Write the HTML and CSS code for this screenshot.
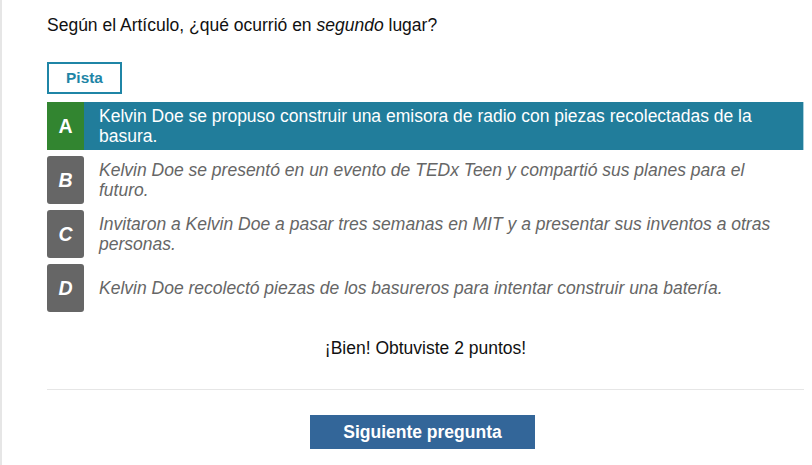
FILE: index.html
```html
<!DOCTYPE html>
<html lang="es">
<head>
<meta charset="utf-8">
<link rel="stylesheet" href="styles.css">
</head>
<body>
<div class="page">
  <div class="content">
    <p class="question">Según el Artículo, ¿qué ocurrió en <em>segundo</em> lugar?</p>
    <button class="hint">Pista</button>
    <ul class="options">
      <li class="option selected"><span class="letter">A</span><span class="text">Kelvin Doe se propuso construir una emisora de radio con piezas recolectadas de la basura.</span></li>
      <li class="option"><span class="letter">B</span><span class="text">Kelvin Doe se presentó en un evento de TEDx Teen y compartió sus planes para el futuro.</span></li>
      <li class="option"><span class="letter">C</span><span class="text">Invitaron a Kelvin Doe a pasar tres semanas en MIT y a presentar sus inventos a otras personas.</span></li>
      <li class="option"><span class="letter">D</span><span class="text">Kelvin Doe recolectó piezas de los basureros para intentar construir una batería.</span></li>
    </ul>
    <p class="feedback">¡Bien! Obtuviste 2 puntos!</p>
    <hr class="divider">
    <div class="actions"><button class="next">Siguiente pregunta</button></div>
  </div>
</div>
</body>
</html>
```
FILE: styles.css
```css
html, body {
  margin: 0;
  padding: 0;
  background: #fff;
}
body {
  font-family: "Liberation Sans", Arial, sans-serif;
  color: #111;
}
.page {
  border-left: 2px solid #e6e6e6;
  min-height: 465px;
  box-sizing: border-box;
}
.content {
  width: 757px;
  margin-left: 45px;
  padding-top: 14px;
}
.question {
  margin: 0;
  font-size: 17.5px;
  line-height: 22px;
}
.hint {
  margin-top: 26px;
  width: 75px;
  height: 32px;
  background: #fff;
  border: 2px solid #1f85a6;
  color: #1f85a6;
  font-family: "Liberation Sans", Arial, sans-serif;
  font-weight: bold;
  font-size: 15.4px;
  padding: 0;
  display: block;
}
.options {
  list-style: none;
  margin: 8px 0 0;
  padding: 0;
  display: flex;
  flex-direction: column;
  gap: 6px;
}
.option {
  display: flex;
  align-items: center;
  min-height: 48px;
}
.letter {
  flex: 0 0 37px;
  align-self: stretch;
  display: flex;
  align-items: center;
  justify-content: center;
  background: #666;
  color: #fff;
  font-weight: bold;
  font-style: italic;
  font-size: 19.5px;
  border-radius: 3px;
}
.text {
  padding-left: 15px;
  padding-right: 20px;
  font-size: 17.5px;
  line-height: 20px;
  font-style: italic;
  color: #666;
}
.selected {
  background: #217d9b;
  border-right: 1px solid #a7d0dd;
}
.selected .letter {
  background: #328530;
  font-style: normal;
  border-radius: 0;
}
.selected .text {
  color: #fff;
  font-style: normal;
}
.feedback {
  margin: 26px 0 0;
  text-align: center;
  font-size: 17.5px;
  line-height: 20px;
  color: #111;
}
.divider {
  border: 0;
  border-top: 1px solid #e6e6e6;
  margin: 31px 0 0;
}
.actions {
  display: flex;
  justify-content: center;
  padding-top: 25px;
  padding-right: 6px;
}
.next {
  width: 225px;
  height: 34px;
  background: #336699;
  color: #fff;
  border: 0;
  font-family: "Liberation Sans", Arial, sans-serif;
  font-weight: bold;
  font-size: 17.5px;
  padding: 0;
}
```
